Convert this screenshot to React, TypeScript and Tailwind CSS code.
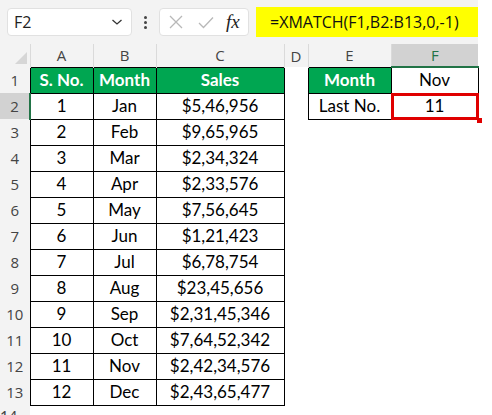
import React from "react";

type Row = { n: number; m: string; s: string };

const rows: Row[] = [
  { n: 1, m: "Jan", s: "$5,46,956" },
  { n: 2, m: "Feb", s: "$9,65,965" },
  { n: 3, m: "Mar", s: "$2,34,324" },
  { n: 4, m: "Apr", s: "$2,33,576" },
  { n: 5, m: "May", s: "$7,56,645" },
  { n: 6, m: "Jun", s: "$1,21,423" },
  { n: 7, m: "Jul", s: "$6,78,754" },
  { n: 8, m: "Aug", s: "$23,45,656" },
  { n: 9, m: "Sep", s: "$2,31,45,346" },
  { n: 10, m: "Oct", s: "$7,64,52,342" },
  { n: 11, m: "Nov", s: "$2,42,34,576" },
  { n: 12, m: "Dec", s: "$2,43,65,477" },
];

const cols = ["A", "B", "C", "D", "E", "F"];

const cell = "border border-black text-center";
const green = "border border-black bg-[#00a651] text-center font-bold text-white";

function RowHead({ n, active }: { n: number; active?: boolean }) {
  return (
    <td
      className={`text-center text-[15px] text-[#444] ${
        active ? "border-r-2 border-r-[#217346] bg-[#d2d2d2]" : "bg-[#f3f3f3]"
      }`}
      style={{ fontFamily: '"Open Sans", sans-serif' }}
    >
      {n}
    </td>
  );
}

export default function App() {
  return (
    <div className="h-[415px] w-[492px] overflow-hidden bg-white" style={{ fontFamily: "Lato, sans-serif" }}>
      {/* formula bar */}
      <div className="flex h-[44px] w-[478px] items-center bg-[#f3f3f3] pl-[7px]">
        <div className="flex h-[28px] w-[125px] items-center justify-between rounded-[4px] border border-[#e1e1e1] bg-white pl-[6px] pr-[8px]">
          <span className="text-[16px] text-[#222]" style={{ fontFamily: '"Open Sans", sans-serif' }}>
            F2
          </span>
          <svg width="12" height="8" viewBox="0 0 12 8">
            <path d="M1.5 2 L6 6 L10.5 2" fill="none" stroke="#333" strokeWidth="1.3" />
          </svg>
        </div>
        <div className="ml-[10px] flex w-[6px] flex-col items-center gap-[2px]">
          <span className="h-[3px] w-[3px] rounded-full bg-[#444]" />
          <span className="h-[3px] w-[3px] rounded-full bg-[#444]" />
          <span className="h-[3px] w-[3px] rounded-full bg-[#444]" />
        </div>
        <div className="ml-[11px] flex h-[28px] w-[90px] items-center rounded-[4px] border border-[#e1e1e1] bg-white pl-[9px]">
          <svg width="14" height="14" viewBox="0 0 14 14">
            <path d="M1 1 L13 13 M13 1 L1 13" stroke="#b8b8b8" strokeWidth="1.3" />
          </svg>
          <svg className="ml-[15px]" width="16" height="13" viewBox="0 0 16 13">
            <path d="M1 7 L5.5 11.5 L15 1.5" fill="none" stroke="#b8b8b8" strokeWidth="1.3" />
          </svg>
          <span
            className="ml-[12px] text-[19px] italic text-[#222]"
            style={{ fontFamily: '"Liberation Serif", serif' }}
          >
            fx
          </span>
        </div>
        <div className="ml-[7px] flex h-[30px] flex-1 items-center bg-[#ffff00] pl-[14px]">
          <span className="text-[16px] text-[#111]" style={{ fontFamily: '"Open Sans", sans-serif' }}>
            =XMATCH(F1,B2:B13,0,-1)
          </span>
        </div>
      </div>

      {/* grid */}
      <table className="table-fixed border-collapse text-[17px] leading-[22px] text-black [&_td]:p-0">
        <colgroup>
          <col className="w-[30px]" />
          <col className="w-[63px]" />
          <col className="w-[63px]" />
          <col className="w-[128px]" />
          <col className="w-[24px]" />
          <col className="w-[83px]" />
          <col className="w-[87px]" />
        </colgroup>
        <tbody>
          <tr className="h-[22px]">
            <td className="relative bg-[#f3f3f3]">
              <svg className="absolute bottom-[3px] right-[3px]" width="12" height="12" viewBox="0 0 12 12">
                <path d="M12 0 L12 12 L0 12 Z" fill="#d6d6d6" />
              </svg>
            </td>
            {cols.map((c) => (
              <td
                key={c}
                className={`border-l border-l-[#dadada] text-center text-[15px] ${
                  c === "F"
                    ? "border-b-2 border-b-[#217346] bg-[#d2d2d2] text-[#217346]"
                    : "bg-[#f3f3f3] text-[#444]"
                }`}
                style={{ fontFamily: '"Open Sans", sans-serif' }}
              >
                {c}
              </td>
            ))}
          </tr>
          <tr className="h-[26px]">
            <RowHead n={1} />
            <td className={green}>S. No.</td>
            <td className={green}>Month</td>
            <td className={green}>Sales</td>
            <td />
            <td className={green}>Month</td>
            <td className={cell}>Nov</td>
          </tr>
          {rows.map((r, i) => (
            <tr key={r.n} className="h-[26px]">
              <RowHead n={i + 2} active={i === 0} />
              <td className={cell}>{r.n}</td>
              <td className={cell}>{r.m}</td>
              <td className={cell}>{r.s}</td>
              <td />
              {i === 0 ? (
                <>
                  <td className={cell}>Last No.</td>
                  <td className={`${cell} relative`}>
                    11
                    <div className="pointer-events-none absolute inset-[-1px] border-[3px] border-[#e00000]" />
                    <div className="absolute bottom-[-4px] right-[-4px] h-[5px] w-[5px] bg-[#e00000]" />
                  </td>
                </>
              ) : (
                <>
                  <td />
                  <td />
                </>
              )}
            </tr>
          ))}
          <tr className="h-[22px]">
            <td className="bg-[#f3f3f3] align-top text-[15px] text-[#444]">14</td>
            <td colSpan={6} />
          </tr>
        </tbody>
      </table>
    </div>
  );
}
